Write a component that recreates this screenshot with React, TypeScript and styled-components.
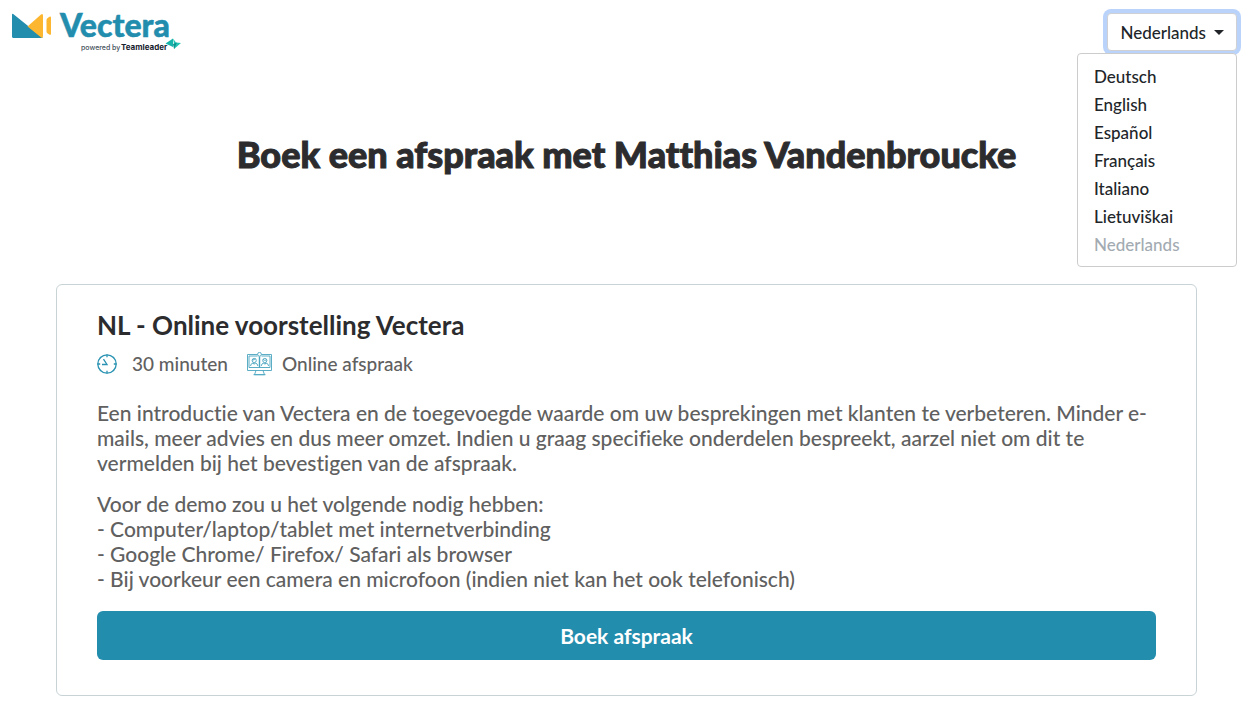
import React from "react";
import styled, { createGlobalStyle } from "styled-components";

const GlobalStyle = createGlobalStyle`
  *, *::before, *::after { box-sizing: border-box; }
  body {
    margin: 0;
    background: #fff;
    color: #606060;
    font-family: Lato, "Open Sans", sans-serif;
    font-size: 21px;
    line-height: 25px;
    font-weight: 500;
    font-variant-ligatures: none;
  }
`;

const Header = styled.header`
  display: flex;
  justify-content: space-between;
  align-items: flex-start;
  padding: 13px 18px 0 12px;
`;

const LogoLink = styled.a`
  display: flex;
  text-decoration: none;
`;

const Language = styled.div`
  position: relative;
`;

const Toggle = styled.button`
  display: flex;
  align-items: center;
  gap: 8px;
  height: 38px;
  padding: 0 12px;
  border: 1px solid #ced0d3;
  border-radius: 4px;
  background: #fff;
  box-shadow: 0 0 0 4px #bad3fb;
  color: #212529;
  font: inherit;
  font-size: 17px;
  outline: none;
`;

const Caret = styled.span`
  border-top: 5px solid #212529;
  border-left: 5px solid transparent;
  border-right: 5px solid transparent;
`;

const Menu = styled.ul`
  position: absolute;
  top: 40px;
  right: 0;
  width: 160px;
  margin: 0;
  padding: 9px 0 7px;
  border: 1px solid #cccccc;
  border-radius: 4px;
  background: #fff;
  list-style: none;
`;

const MenuLink = styled.a<{ $disabled?: boolean }>`
  display: block;
  padding: 0 16px;
  color: ${(p) => (p.$disabled ? "#a3abb2" : "#212529")};
  font-size: 17px;
  line-height: 28px;
  text-decoration: none;
`;

const Title = styled.h1`
  margin: 79px 26px 0 24px;
  color: #2c2c2e;
  font-size: 36px;
  line-height: 42px;
  font-weight: 900;
  text-align: center;
  -webkit-text-stroke: 1px #2c2c2e;
`;

const Card = styled.article`
  margin: 109px 58px 24px 56px;
  padding: 28px 40px 35px;
  border: 1px solid #c8d3d6;
  border-radius: 6px;
`;

const CardTitle = styled.h2`
  margin: 0;
  color: #2c2c2e;
  font-size: 26px;
  line-height: 25px;
  font-weight: 700;
`;

const Facts = styled.div`
  display: flex;
  gap: 19px;
  margin-top: 13px;
  font-size: 19px;
`;

const Fact = styled.span<{ $gap: number }>`
  display: flex;
  align-items: center;
  gap: ${(p) => p.$gap}px;
`;

const Paragraph = styled.p`
  margin: 0 0 16px;
`;

const Description = styled.div`
  margin-top: 24px;
`;

const BookButton = styled.button`
  display: block;
  width: 100%;
  height: 49px;
  margin-top: 20px;
  border: 0;
  border-radius: 6px;
  background: #238dae;
  color: #fff;
  font: inherit;
  font-size: 21px;
  font-weight: 700;
`;

const LogoDrawing = styled.svg`
  display: block;
  overflow: visible;
`;

const Logo = () => (
  <LogoDrawing width="170" height="41" viewBox="0 0 170 41" role="img" aria-label="Vectera, powered by Teamleader">
    <path d="M0 1.5Q0 .2 1.2 1L31 25H2Q0 25 0 23z" fill="#238dae" />
    <path d="M15.500 13.500 29 1.500Q31 0 31 3V23Q31 25 29.500 25z" fill="#fdb62f" />
    <path d="M0 1.500 29.500 25H2Q0 25 0 23z" fill="#238dae" />
    <path d="M34.500 7Q34.500 5.500 36 4.700L37.500 3.800Q39 3 39 5V20.500Q39 22.500 37.300 21.600L36 20.700Q34.500 20 34.500 18.500z" fill="#fdb62f" />
    <text x="48" y="24" fill="#238dae" stroke="#238dae" strokeWidth=".5" fontFamily="Lato, sans-serif" fontSize="32" fontWeight="900">Vectera</text>
    <text x="69" y="37" fill="#44505a" fontFamily="Inter, sans-serif" fontSize="7">powered by</text>
    <text x="109" y="37" fill="#17222e" fontFamily="Inter, sans-serif" fontSize="8" fontWeight="700">Teamleader</text>
    <path d="M153.500 30.500 161 25.500V34z" fill="#16b3ab" />
    <path d="M161 25.500 164 29.500 169 30 162 36V31z" fill="#24c4b4" />
    <path d="m161 31 4-1.500-3 6.500z" fill="#0b938f" />
  </LogoDrawing>
);

const ClockIcon = () => (
  <svg width="20" height="20" viewBox="0 0 20 20" fill="none" stroke="#2a93b3" strokeWidth="1.300" aria-hidden="true">
    <circle cx="10" cy="10" r="9.200" />
    <path d="M10 .5v2.700M10 16.800v2.700M.5 10h2.700M16.800 10h2.700M16 4l.9-.9M16 16l.9.9M4 16l-.9.9M4 4l-.9-.9M6.500 5.200 10 10.500H5" />
  </svg>
);

const MeetingIcon = () => (
  <svg width="25" height="24" viewBox="0 0 25 24" fill="none" stroke="#4aa5c1" strokeWidth=".9" aria-hidden="true">
    <path d="M10.500 2.500H.5v16h24v-16h-10M2 4h8.500M14.500 4H23v11.500H2V4" />
    <circle cx="12.500" cy="2.300" r="1.900" />
    <path strokeWidth="1.400" d="M12.500 4.500v11" />
    <path d="M9 18.500l-1.500 4.200h10L16 18.500M6.500 22.700h12" />
    <circle cx="7.200" cy="8.500" r="2.100" />
    <circle cx="17.800" cy="8.500" r="2.100" />
    <path d="M3.500 14q.3-2.700 2.700-3l1 1.300 1-1.300q2.400.3 2.700 3M14.200 14q.3-2.700 2.700-3l1 1.300 1-1.300q2.400.3 2.700 3M5.200 8q2.500.3 3-1.500M16 7.500q1.600 1.400 3.700.5" />
  </svg>
);

const languages = ["Deutsch", "English", "Español", "Français", "Italiano", "Lietuviškai", "Nederlands"];

export default function App() {
  return (
    <>
      <GlobalStyle />
      <Header>
        <LogoLink href="#"><Logo /></LogoLink>
        <Language>
          <Toggle type="button" aria-haspopup="true" aria-expanded="true">Nederlands<Caret /></Toggle>
          <Menu>
            {languages.map((name) => (
              <li key={name}>
                <MenuLink href="#" $disabled={name === "Nederlands"}>{name}</MenuLink>
              </li>
            ))}
          </Menu>
        </Language>
      </Header>
      <main>
        <Title>Boek een afspraak met Matthias Vandenbroucke</Title>
        <Card>
          <CardTitle>NL - Online voorstelling Vectera</CardTitle>
          <Facts>
            <Fact $gap={15}><ClockIcon />30 minuten</Fact>
            <Fact $gap={10}><MeetingIcon />Online afspraak</Fact>
          </Facts>
          <Description>
            <Paragraph>
              Een introductie van Vectera en de toegevoegde waarde om uw besprekingen met klanten te verbeteren. Minder e-mails, meer advies en dus meer omzet. Indien u graag specifieke onderdelen bespreekt, aarzel niet om dit te vermelden bij het bevestigen van de afspraak.
            </Paragraph>
            <Paragraph>
              Voor de demo zou u het volgende nodig hebben:<br />
              - Computer/laptop/tablet met internetverbinding<br />
              - Google Chrome/ Firefox/ Safari als browser<br />
              - Bij voorkeur een camera en microfoon (indien niet kan het ook telefonisch)
            </Paragraph>
          </Description>
          <BookButton type="button">Boek afspraak</BookButton>
        </Card>
      </main>
    </>
  );
}
